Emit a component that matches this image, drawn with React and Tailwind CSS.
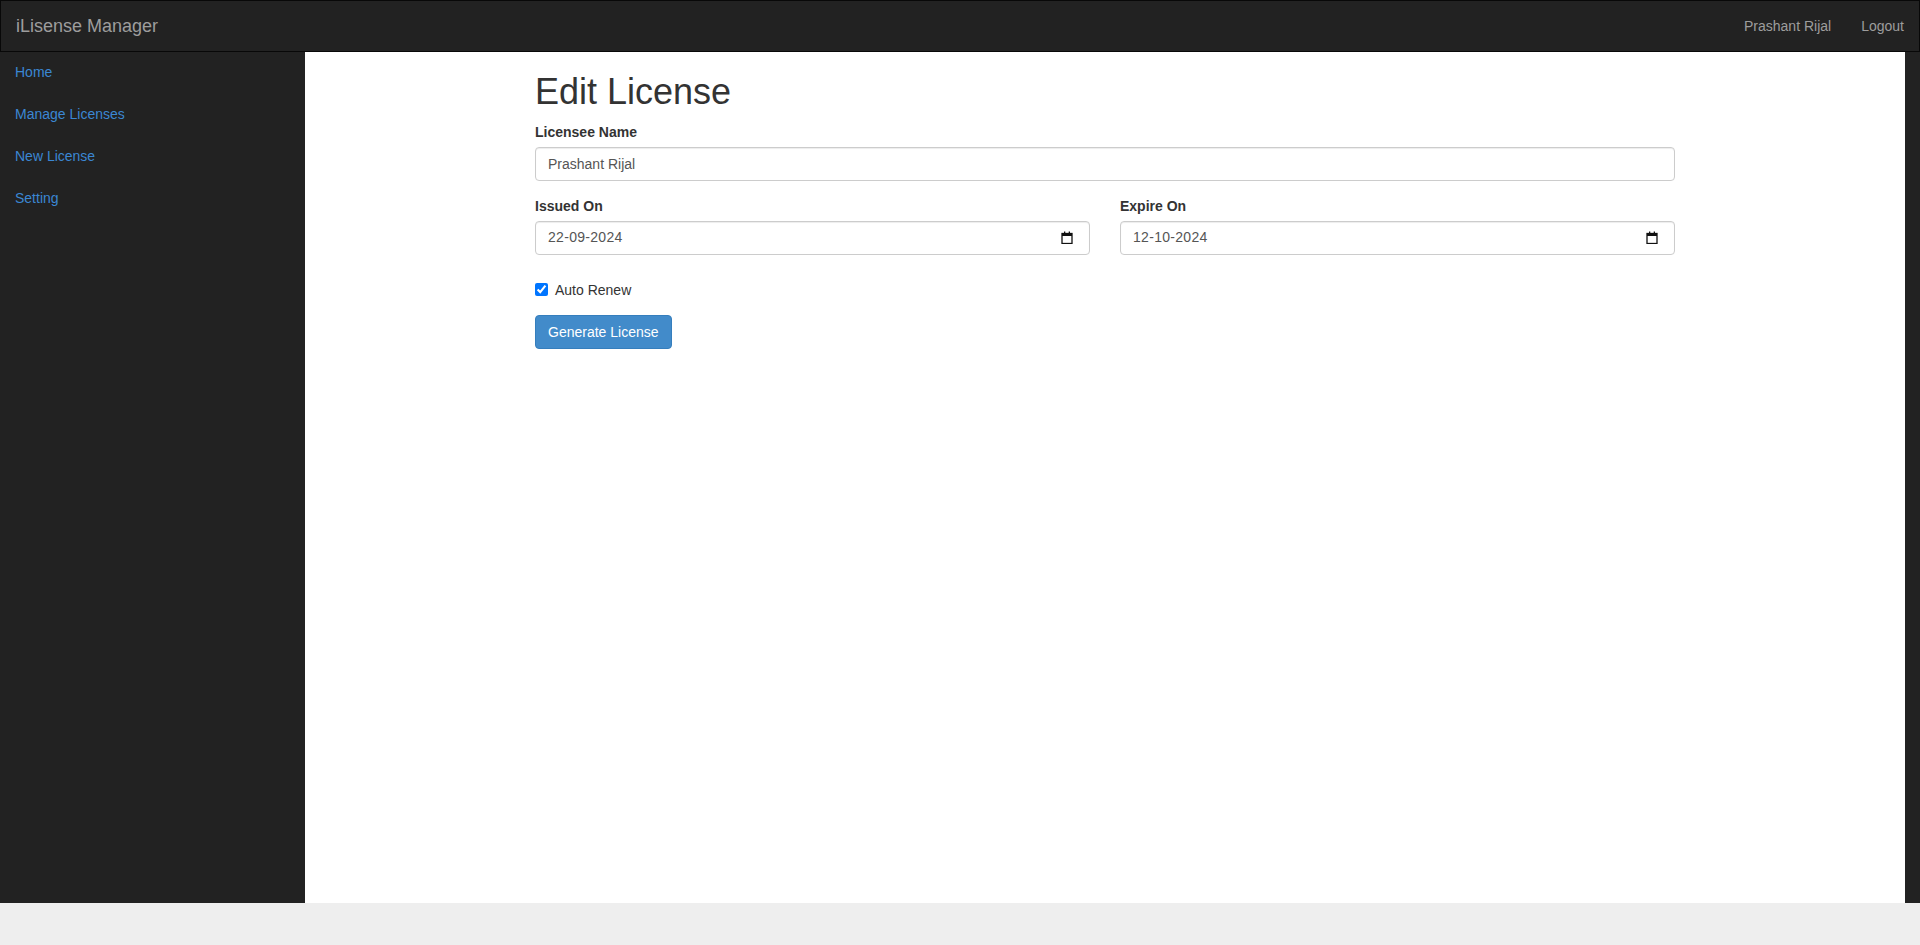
import React from "react";

function CalendarIcon() {
  return (
    <svg width="12" height="13" viewBox="0 0 12 13" className="shrink-0">
      <rect x="1" y="2.5" width="10" height="10" fill="none" stroke="#111" strokeWidth="1.3" />
      <rect x="1" y="2.5" width="10" height="2.5" fill="#111" />
      <rect x="3" y="0.5" width="1.3" height="2.5" fill="#111" />
      <rect x="7.7" y="0.5" width="1.3" height="2.5" fill="#111" />
    </svg>
  );
}

function DateField({ label, value }) {
  return (
    <div className="mb-[15px]">
      <label className="block mb-[5px] font-bold text-[14px] leading-[20px] text-[#333]">{label}</label>
      <div className="flex items-center justify-between h-[34px] px-[12px] pr-[16px] border border-[#ccc] rounded-[4px] bg-white shadow-[inset_0_1px_1px_rgba(0,0,0,0.075)]">
        <span className="text-[14px] text-[#555] tracking-[0.3px]">{value}</span>
        <CalendarIcon />
      </div>
    </div>
  );
}

export default function App() {
  const links = ["Home", "Manage Licenses", "New License", "Setting"];
  return (
    <div
      className="w-full h-[945px] flex flex-col bg-[#eee] text-[14px]"
      style={{ fontFamily: '"Liberation Sans", Arial, Helvetica, sans-serif' }}
    >
      <nav className="h-[52px] shrink-0 bg-[#222] border border-[#080808] flex items-center justify-between">
        <a className="px-[15px] text-[18px] leading-[20px] text-[#9d9d9d]">iLisense Manager</a>
        <div className="flex">
          <a className="px-[15px] leading-[20px] text-[#9d9d9d]">Prashant Rijal</a>
          <a className="px-[15px] leading-[20px] text-[#9d9d9d]">Logout</a>
        </div>
      </nav>
      <div className="flex h-[851px] shrink-0">
        <aside className="w-[305px] shrink-0 bg-[#222]">
          <ul>
            {links.map((l) => (
              <li key={l} className="mb-[2px]">
                <a className="block px-[15px] py-[10px] leading-[20px] text-[#3b87d3]">{l}</a>
              </li>
            ))}
          </ul>
        </aside>
        <main className="flex-1 bg-white">
          <div className="w-[1170px] mx-auto px-[15px]">
            <h1 className="mt-[20px] mb-[10px] text-[36px] leading-[1.1] text-[#333]">Edit License</h1>
            <div className="mb-[15px]">
              <label className="block mb-[5px] font-bold leading-[20px] text-[#333]">Licensee Name</label>
              <input
                readOnly
                value="Prashant Rijal"
                className="block w-full h-[34px] px-[12px] py-[6px] border border-[#ccc] rounded-[4px] text-[14px] text-[#555] shadow-[inset_0_1px_1px_rgba(0,0,0,0.075)] outline-none"
              />
            </div>
            <div className="grid grid-cols-2 gap-x-[30px]">
              <DateField label="Issued On" value="22-09-2024" />
              <DateField label="Expire On" value="12-10-2024" />
            </div>
            <div className="mb-[15px] mt-[10px] h-[20px] flex items-center">
              <input type="checkbox" defaultChecked className="w-[13px] h-[13px] m-0 accent-[#0075ff]" />
              <span className="ml-[7px] leading-[20px] text-[#333]">Auto Renew</span>
            </div>
            <button className="h-[34px] px-[12px] border border-[#357ebd] rounded-[4px] bg-[#428bca] text-white text-[14px] leading-[20px]">
              Generate License
            </button>
          </div>
        </main>
        <div className="w-[15px] shrink-0 bg-[#222]" />
      </div>
      <div className="flex-1 bg-[#eee]" />
    </div>
  );
}
